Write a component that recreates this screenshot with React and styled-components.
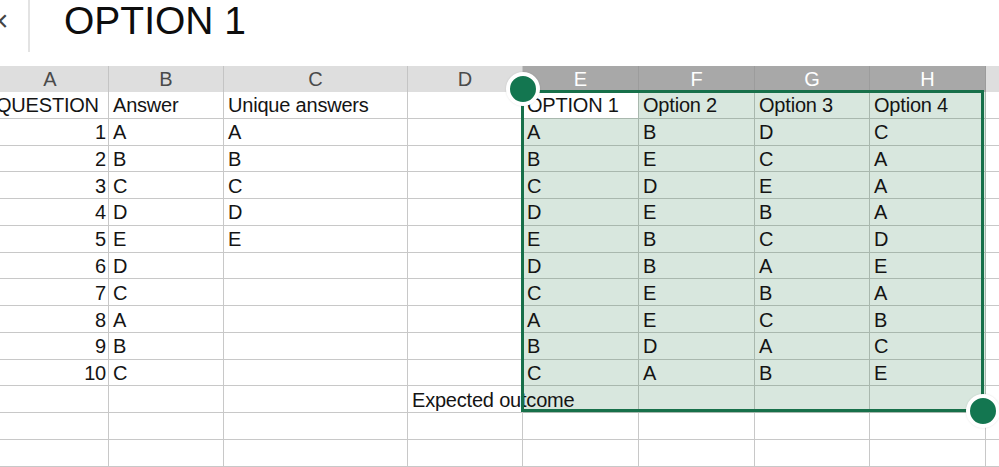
import React from "react"
import styled, { createGlobalStyle } from "styled-components"

const GlobalStyle = createGlobalStyle`
  html, body {
    margin: 0;
    padding: 0;
    background: #ffffff;
    font-family: "Liberation Sans", Arial, sans-serif;
    color: #141414;
  }
`

const Page = styled.div`
  width: 999px;
  height: 467px;
  overflow: hidden;
  background: #ffffff;
`

const Toolbar = styled.div`
  height: 66px;
  display: flex;
  align-items: flex-start;
`

const CloseGlyph = styled.div`
  width: 37px;
  margin-left: -9px;
  font-size: 30px;
  line-height: 42px;
  color: #444;
  font-weight: 300;
`

const Divider = styled.div`
  width: 2px;
  height: 52px;
  background: #e3e3e3;
`

const SheetTitle = styled.h1`
  margin: 0 0 0 34px;
  font-size: 39px;
  font-weight: 400;
  line-height: 42px;
  color: #0d0d0d;
`

const Viewport = styled.div`
  overflow: hidden;
  width: 999px;
`

const Grid = styled.div`
  position: relative;
  display: grid;
  margin-left: -8px;
  grid-template-columns: 117px 115px 184px 115px 116px 116px 115px 116px 120px;
  grid-template-rows: 26px repeat(14, 26.77px);
`

const HeaderCell = styled.div`
  grid-row: 1;
  grid-column: ${p => p.$col};
  display: flex;
  align-items: center;
  justify-content: center;
  background: ${p => (p.$selected ? "#a8a8a8" : "#dedede")};
  color: ${p => (p.$selected ? "#ffffff" : "#4a4a4a")};
  border-right: 1px solid ${p => (p.$selected ? "#9c9c9c" : "#c4c4c4")};
  font-size: 20px;
  line-height: 26px;
`

const Cell = styled.div`
  grid-row: ${p => p.$row};
  grid-column: ${p => p.$col};
  position: relative;
  display: flex;
  align-items: center;
  justify-content: ${p => (p.$numeric ? "flex-end" : "flex-start")};
  padding: ${p => (p.$numeric ? "2px 2px 0 0" : "2px 0 0 4px")};
  box-sizing: border-box;
  background: ${p => (p.$active ? "#ffffff" : p.$selected ? "#d8e7de" : "#ffffff")};
  border-right: 1px solid ${p => (p.$selected ? "#a9b8ae" : "#c8c8c8")};
  border-bottom: 1px solid ${p => (p.$selected ? "#a9b8ae" : "#c8c8c8")};
  font-size: 20px;
  letter-spacing: -0.2px;
  white-space: nowrap;
  overflow: visible;
  z-index: ${p => (p.$overflowing ? 2 : 0)};
`

const Selection = styled.div`
  grid-column: 5 / 9;
  grid-row: 2 / 14;
  margin: -2px 2px 1px -2px;
  border: 3px solid #17704a;
  position: relative;
  pointer-events: none;
  z-index: 3;
`

const Handle = styled.div`
  position: absolute;
  width: 26px;
  height: 26px;
  border-radius: 50%;
  background: #137650;
  border: 4px solid #ffffff;
  box-shadow: 0 0 2px rgba(0, 0, 0, 0.12);
  ${p => (p.$corner === "start" ? "top: -21px; left: -18px;" : "bottom: -19px; right: -19px;")}
`

const columns = ["A", "B", "C", "D", "E", "F", "G", "H", ""]
const selectedCols = [4, 5, 6, 7]

const colA = ["QUESTION", 1, 2, 3, 4, 5, 6, 7, 8, 9, 10]
const colB = ["Answer", "A", "B", "C", "D", "E", "D", "C", "A", "B", "C"]
const colC = ["Unique answers", "A", "B", "C", "D", "E"]
const options = [
  ["OPTION 1", "Option 2", "Option 3", "Option 4"],
  ["A", "B", "D", "C"],
  ["B", "E", "C", "A"],
  ["C", "D", "E", "A"],
  ["D", "E", "B", "A"],
  ["E", "B", "C", "D"],
  ["D", "B", "A", "E"],
  ["C", "E", "B", "A"],
  ["A", "E", "C", "B"],
  ["B", "D", "A", "C"],
  ["C", "A", "B", "E"],
]

const TOTAL_ROWS = 14

const cellValue = (row, col) => {
  if (col === 0) return colA[row]
  if (col === 1) return colB[row]
  if (col === 2) return colC[row]
  if (col === 3 && row === 11) return "Expected outcome"
  if (col >= 4 && col <= 7 && options[row]) return options[row][col - 4]
  return null
}

const renderRows = () => {
  const cells = []
  for (let row = 0; row < TOTAL_ROWS; row++) {
    columns.forEach((_, col) => {
      const selected = selectedCols.includes(col) && row <= 11
      cells.push(
        <Cell
          key={`${row}-${col}`}
          $row={row + 2}
          $col={col + 1}
          $numeric={col === 0 && row > 0}
          $selected={selected}
          $active={row === 0 && col === 4}
          $overflowing={col === 3 && row === 11}
        >
          {cellValue(row, col)}
        </Cell>
      )
    })
  }
  return cells
}

const App = () => (
  <Page>
    <GlobalStyle />
    <Toolbar>
      <CloseGlyph>×</CloseGlyph>
      <Divider />
      <SheetTitle>OPTION 1</SheetTitle>
    </Toolbar>
    <Viewport>
      <Grid>
        {columns.map((name, i) => (
          <HeaderCell key={`h-${i}`} $col={i + 1} $selected={selectedCols.includes(i)}>
            {name}
          </HeaderCell>
        ))}
        {renderRows()}
        <Selection>
          <Handle $corner="start" />
          <Handle $corner="end" />
        </Selection>
      </Grid>
    </Viewport>
  </Page>
)

export default App
